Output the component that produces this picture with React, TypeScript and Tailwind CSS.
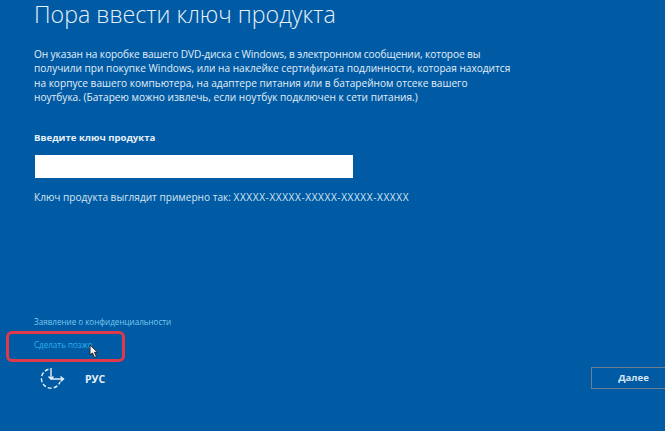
export default function App() {
  return (
    <div className="relative w-[665px] h-[431px] overflow-hidden bg-[#005ba4] font-['Open_Sans','Noto_Sans',sans-serif] text-white flex flex-col pl-[34px]">
      <h1 className="h-[28px] text-[23.2px] leading-[28px] font-light text-[#e6f0f8] whitespace-nowrap">Пора ввести ключ продукта</h1>
      <div className="mt-[19px] text-[10.12px] leading-[14.33px] text-[#e3eef7] whitespace-nowrap">
        <p className="tracking-[-0.09px]">Он указан на коробке вашего DVD-диска с Windows, в электронном сообщении, которое вы</p>
        <p>получили при покупке Windows, или на наклейке сертификата подлинности, которая находится</p>
        <p>на корпусе вашего компьютера, на адаптере питания или в батарейном отсеке вашего</p>
        <p>ноутбука. (Батарею можно извлечь, если ноутбук подключен к сети питания.)</p>
      </div>
      <div className="mt-[27px] text-[9.6px] leading-[14px] font-bold text-[#e6f0f8] whitespace-nowrap">Введите ключ продукта</div>
      <div className="mt-[10px] ml-[1px] w-[318px] h-[23px] bg-white" />
      <div className="mt-[12px] text-[10.1px] leading-[14px] text-[#d5e5f2] whitespace-nowrap">
        Ключ продукта выглядит примерно так: <span className="tracking-[0.58px]">XXXXX-XXXXX-XXXXX-XXXXX-XXXXX</span>
      </div>
      <div className="mt-[112px] text-[8.07px] leading-[12px] text-[#7cc8f0] whitespace-nowrap">Заявление о конфиденциальности</div>
      <div className="mt-[11px] text-[8.07px] leading-[12px] text-[#2bb0f0] whitespace-nowrap">Сделать позже</div>
      <div className="mt-[15px] flex items-center h-[24px]">
        <svg className="ml-[5px]" width="26" height="24" viewBox="0 0 26 24" fill="none" stroke="#e6f0f8" strokeWidth="1.4">
          <path d="M9.5 3.3A9.6 9.6 0 1 0 21 16" strokeDasharray="4 2" />
          <path d="M12 2v11h12M21.5 10.5l3 2.5-3 2.5M9.5 10.5l2.5 2.5 2.5-2.5" />
        </svg>
        <span className="ml-[20px] pt-[4px] text-[10.5px] font-bold text-[#e6f0f8]">РУС</span>
      </div>
      <div className="absolute left-[591px] top-[367px] w-[90px] h-[22px] border border-[#6d7f8e] flex items-center justify-center pr-[5px] text-[9.6px] font-bold text-[#d5e5f2]">Далее</div>
      <div className="absolute left-[6px] top-[331px] w-[119px] h-[31px] rounded-[6px] border-[3px] border-[#e0394a]" />
      <svg className="absolute left-[89px] top-[344px]" width="11" height="15" viewBox="0 0 11 15">
        <path d="M1 1v10l2.5-2 2 4.5 2-1-2-4.2h3.2z" fill="#f4f4f4" stroke="#222" strokeWidth="1" />
      </svg>
    </div>
  );
}
